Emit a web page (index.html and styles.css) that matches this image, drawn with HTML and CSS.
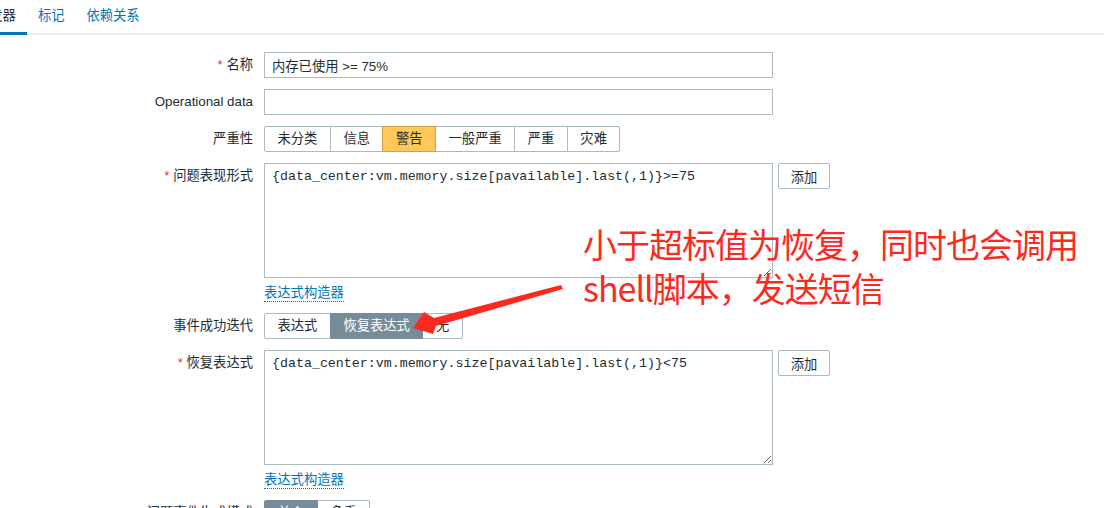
FILE: index.html
```html
<!DOCTYPE html>
<html lang="zh-CN">
<head>
<meta charset="utf-8">
<title>触发器</title>
<link rel="stylesheet" href="styles.css">
</head>
<body>
<div class="page">
  <nav class="tabs">
    <span class="tab active">触发器</span>
    <span class="tab">标记</span>
    <span class="tab">依赖关系</span>
  </nav>

  <form class="form">
    <label class="lbl"><span class="req">*</span> 名称</label>
    <div class="field"><input class="text" type="text" value="内存已使用 >= 75%"></div>

    <label class="lbl">Operational data</label>
    <div class="field"><input class="text" type="text" value=""></div>

    <label class="lbl">严重性</label>
    <div class="field">
      <div class="seg-group">
        <span class="seg">未分类</span>
        <span class="seg">信息</span>
        <span class="seg warn">警告</span>
        <span class="seg">一般严重</span>
        <span class="seg">严重</span>
        <span class="seg">灾难</span>
      </div>
    </div>

    <label class="lbl"><span class="req">*</span> 问题表现形式</label>
    <div class="field-col">
      <div class="ta-row">
        <textarea class="expr">{data_center:vm.memory.size[pavailable].last(,1)}>=75</textarea>
        <button type="button" class="btn">添加</button>
      </div>
      <a class="link">表达式构造器</a>
    </div>

    <label class="lbl">事件成功迭代</label>
    <div class="field">
      <div class="seg-group">
        <span class="seg">表达式</span>
        <span class="seg on">恢复表达式</span>
        <span class="seg">无</span>
      </div>
    </div>

    <label class="lbl"><span class="req">*</span> 恢复表达式</label>
    <div class="field-col">
      <div class="ta-row">
        <textarea class="expr">{data_center:vm.memory.size[pavailable].last(,1)}&lt;75</textarea>
        <button type="button" class="btn">添加</button>
      </div>
      <a class="link">表达式构造器</a>
    </div>

    <label class="lbl">问题事件生成模式</label>
    <div class="field">
      <div class="seg-group">
        <span class="seg on">单个</span>
        <span class="seg">多重</span>
      </div>
    </div>
  </form>

  <div class="note">小于超标值为恢复，同时也会调用<br>shell脚本，发送短信</div>

  <svg class="arrow" width="1104" height="508" viewBox="0 0 1104 508">
    <polygon points="413,328 424,312 434,318 561,285 563,289 436,326 433,334" fill="#fb2a1f"/>
  </svg>
</div>
</body>
</html>
```

FILE: styles.css
```css
html, body {
  margin: 0;
  padding: 0;
  overflow: hidden;
  background: #ffffff;
}

.page {
  position: relative;
  width: 1104px;
  height: 508px;
  overflow: hidden;
  font-family: "Liberation Sans", "Noto Sans CJK SC", sans-serif;
  font-size: 13.3px;
  color: #1f2c33;
}

.tabs {
  display: flex;
  margin-left: -35px;
  border-bottom: 2px solid #ebeef0;
}

.tab {
  padding: 0 11px;
  line-height: 32px;
  border-bottom: 3px solid transparent;
  margin-bottom: -2px;
  color: #0275b8;
  white-space: nowrap;
}

.tab.active {
  color: #1f2c33;
  border-bottom-color: #0275b8;
}

.form {
  display: grid;
  grid-template-columns: 253px 1fr;
  column-gap: 11px;
  row-gap: 11px;
  margin-top: 17px;
}

.lbl {
  text-align: right;
  line-height: 26px;
  white-space: nowrap;
  color: #1f2c33;
}

.req {
  color: #e33734;
}

.field {
  display: flex;
  align-items: flex-start;
}

.text {
  box-sizing: border-box;
  width: 509px;
  height: 26px;
  margin: 0;
  padding: 0 7px;
  border: 1px solid #acbbc2;
  border-radius: 0;
  font-family: inherit;
  font-size: 13.3px;
  color: #1f2c33;
  outline: none;
}

.seg-group {
  display: flex;
  padding-left: 1px;
}

.seg {
  box-sizing: border-box;
  height: 26px;
  line-height: 24px;
  padding: 0 12.5px;
  margin-left: -1px;
  border: 1px solid #acbbc2;
  background: #ffffff;
  color: #1f2c33;
  white-space: nowrap;
}

.seg:first-child {
  border-radius: 2px 0 0 2px;
}

.seg:last-child {
  border-radius: 0 2px 2px 0;
}

.seg.warn {
  background: #ffc859;
  border-color: #c9a34e;
  position: relative;
}

.seg.on {
  background: #768d99;
  border-color: #768d99;
  color: #ffffff;
  position: relative;
}

.field-col {
  display: flex;
  flex-direction: column;
  align-items: flex-start;
}

.ta-row {
  display: flex;
  align-items: flex-start;
  gap: 5px;
}

.expr {
  box-sizing: border-box;
  width: 509px;
  height: 115px;
  margin: 0;
  padding: 4px 7px;
  border: 1px solid #acbbc2;
  border-radius: 0;
  font-family: "Liberation Mono", monospace;
  font-size: 13.3px;
  line-height: 18px;
  color: #1f2c33;
  outline: none;
}

.btn {
  box-sizing: border-box;
  width: 52px;
  height: 26px;
  margin: 0;
  padding: 0;
  border: 1px solid #acbbc2;
  border-radius: 2px;
  background: #ffffff;
  font-family: "Liberation Sans", "Noto Sans CJK SC", sans-serif;
  font-size: 13.3px;
  color: #1f2c33;
}

.link {
  display: inline-block;
  margin-top: 6px;
  line-height: 17px;
  color: #0275b8;
  border-bottom: 1px dotted #0275b8;
  cursor: pointer;
}

.note {
  position: absolute;
  left: 583px;
  top: 222px;
  font-family: "Noto Sans CJK SC", sans-serif;
  font-size: 34px;
  letter-spacing: -1px;
  line-height: 44px;
  color: #fb2a1f;
  white-space: nowrap;
}

.arrow {
  position: absolute;
  left: 0;
  top: 0;
  pointer-events: none;
}
```
